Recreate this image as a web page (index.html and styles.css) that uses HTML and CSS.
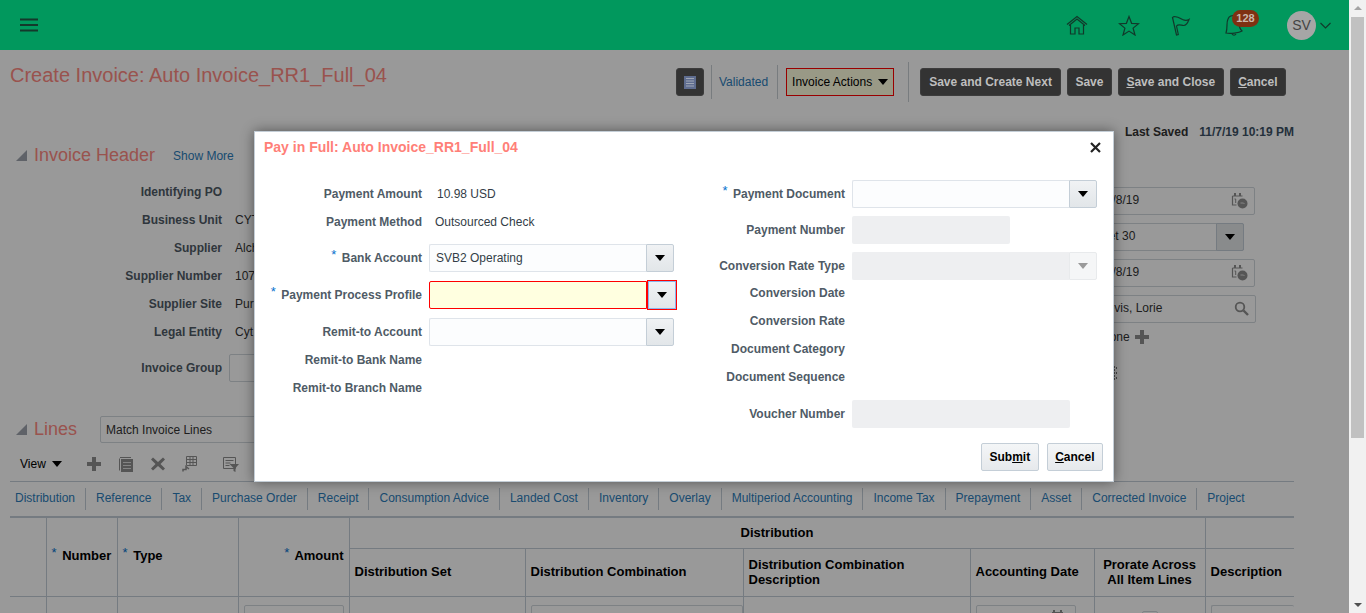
FILE: index.html
```html
<!DOCTYPE html>
<html>
<head>
<meta charset="utf-8">
<title>Create Invoice: Auto Invoice_RR1_Full_04</title>
<link rel="stylesheet" href="styles.css">
</head>
<body>
<div id="contentWrapper">

<div class="topbar">
	<svg class="burger" width="18" height="14" viewBox="0 0 18 14"><path d="M0 1.500h18M0 7h18M0 12.500h18" stroke="#14392b" stroke-width="1.800"/></svg>
	<div class="topIcons">
		<svg class="topIcon homeIcon" width="22" height="20" viewBox="0 0 22 20" fill="none" stroke="#12382a" stroke-width="1.200"><path d="M1 9.500 11 1.500l10 8M3 10.500 11 4l8 6.500M4.500 10v9h4.500v-6h4v6h4.500v-9"/></svg>
		<svg class="topIcon" width="22" height="21" viewBox="0 0 22 21" fill="none" stroke="#12382a" stroke-width="1.200"><path d="M11 1.500l2.600 6.800 7 .4-5.500 4.400 1.900 6.900-6-3.900-6 3.900 1.900-6.900L1.400 8.700l7-.4z"/></svg>
		<svg class="topIcon" width="20" height="21" viewBox="0 0 20 21" fill="none" stroke="#12382a" stroke-width="1.200"><path d="M1.500 2.500 5.500 20l1.800-.5L5.500 11c2-2.500 5-.5 7-.5 2 0 4-2 5.500-6-2.500 1.500-4.500 1-6.500 0C9 3 5 1.500 3 1.500z"/></svg>
		<div class="bell">
			<svg width="18" height="22" viewBox="0 0 18 22" fill="none" stroke="#12382a" stroke-width="1.200"><path d="M3 5c1-3 4-4 7-3 3 1 4 4 4 7s1 6 3 8c-3 2-12 3-16 2 1-3 1-5 1-8 0-2 0-4 1-6zM7 20c1 1.500 3 1.500 4 0"/></svg>
			<span class="badge">128</span>
		</div>
		<div class="avatar">SV</div>
		<svg class="chevron" width="11" height="7" viewBox="0 0 11 7" fill="none" stroke="#12382a" stroke-width="1.100"><path d="M.5 1l5 5 5-5"/></svg>
	</div>
</div>

<div class="page">
	<div class="titleRow">
		<h1>Create Invoice: Auto Invoice_RR1_Full_04</h1>
		<div class="actions">
			<button class="darkBtn iconBtn"><svg width="12" height="13" viewBox="0 0 12 13"><rect width="12" height="13" fill="#5F6D90"/><path d="M2 2.500h8M2 5h8M2 7.500h8M2 10h8" stroke="#A0A7B5" stroke-width="1"/></svg></button>
			<span class="vsep"></span>
			<a class="link validated">Validated</a>
			<span class="vsep"></span>
			<button class="menuBtn">Invoice Actions<i class="arrow"></i></button>
			<span class="vsep tall"></span>
			<button class="darkBtn nextBtn">Save and Create Next</button>
			<button class="darkBtn">Save</button>
			<button class="darkBtn"><u>S</u>ave and Close</button>
			<button class="darkBtn"><u>C</u>ancel</button>
		</div>
	</div>
	<div class="savedRow"><b>Last Saved</b><b class="savedTime">11/7/19 10:19 PM</b></div>

	<div class="sectionHead headerHead">
		<i class="disclose"></i><h2>Invoice Header</h2><a class="link showMore">Show More</a>
	</div>

	<div class="invoiceForm">
		<div class="bgLeft">
			<div class="bgRow"><label>Identifying PO</label></div>
			<div class="bgRow"><label>Business Unit</label><span>CYT</span></div>
			<div class="bgRow"><label>Supplier</label><span>Alch</span></div>
			<div class="bgRow"><label>Supplier Number</label><span>107</span></div>
			<div class="bgRow"><label>Supplier Site</label><span>Pur</span></div>
			<div class="bgRow"><label>Legal Entity</label><span>Cyt</span></div>
			<div class="bgRow groupRow"><label>Invoice Group</label><span class="bgInput"></span></div>
		</div>
		<div class="bgRight">
			<div class="bgField">11/8/19<svg class="fieldIcon" width="17" height="16" viewBox="0 0 17 16"><path d="M1.500 3h10M1.500 3v9h4" stroke="#8E8E8E" stroke-width="1.200" fill="none"/><path d="M3 0h2v3H3zM8 0h2v3H8z" fill="#8E8E8E"/><path d="M3.500 6h1.200v4" stroke="#8E8E8E" fill="none"/><circle cx="11.500" cy="10.500" r="5" fill="#8E8E8E"/><path d="M9.500 10h3l1 1" stroke="#DDD" fill="none"/></svg></div>
			<div class="bgField short">Net 30<span class="bgDrop"><i class="arrow"></i></span></div>
			<div class="bgField">11/8/19<svg class="fieldIcon" width="17" height="16" viewBox="0 0 17 16"><path d="M1.500 3h10M1.500 3v9h4" stroke="#8E8E8E" stroke-width="1.200" fill="none"/><path d="M3 0h2v3H3zM8 0h2v3H8z" fill="#8E8E8E"/><path d="M3.500 6h1.200v4" stroke="#8E8E8E" fill="none"/><circle cx="11.500" cy="10.500" r="5" fill="#8E8E8E"/><path d="M9.500 10h3l1 1" stroke="#DDD" fill="none"/></svg></div>
			<div class="bgField wide">Devis, Lorie<svg class="fieldIcon" width="15" height="15" viewBox="0 0 15 15" fill="none" stroke="#8E8E8E"><circle cx="6" cy="6" r="4.300" stroke-width="1.800"/><path d="M9.500 9.500 14 14" stroke-width="2.400"/></svg></div>
			<div class="noneRow">None<svg width="14" height="14" viewBox="0 0 14 14"><path d="M5 0h4v5h5v4H9v5H5V9H0V5h5z" fill="#8E8E8E"/></svg></div>
			<svg class="hiddenIcon" width="25" height="15" viewBox="0 0 25 15"><path d="M21.500 0v15M23.500 1v3M23.500 6v3M23.500 11v3" stroke="#777" stroke-dasharray="2 1"/></svg>
		</div>
	</div>

	<div class="sectionHead linesHead">
		<i class="disclose"></i><h2>Lines</h2><span class="matchInput">Match Invoice Lines</span>
	</div>

	<div class="linesBar">
		<span class="viewMenu">View<i class="arrow"></i></span>
		<svg class="barIcon first" width="14" height="14" viewBox="0 0 14 14"><path d="M5 0h4v5h5v4H9v5H5V9H0V5h5z" fill="#8E8E8E"/></svg>
		<svg class="barIcon" width="14" height="15" viewBox="0 0 14 15" fill="none" stroke="#8E8E8E"><path d="M.5 1.500v12M1 .5h11"/><rect x="2" y="2" width="12" height="13" fill="#8E8E8E" stroke="none"/><path d="M4 5.500h8M4 8.500h8M4 11.500h8" stroke="#DDD"/></svg>
		<svg class="barIcon" width="14" height="14" viewBox="0 0 14 14"><path d="M2 .5l5 4.500 5-4.500L14 2.500 9.500 7l4.500 4.500-2 2L7 9l-5 4.500-2-2L4.500 7 0 2.500z" fill="#8E8E8E"/></svg>
		<svg class="barIcon tableIcon" width="15" height="16" viewBox="0 0 15 16" fill="none" stroke="#8E8E8E"><path d="M4.500.5h10v9h-10zM4.500 3.500h10M4.500 6.500h10M8 .5v9M11 .5v9"/><path d="M1 15.500v-2h3v-3l3 2.500" stroke-width="1.500"/></svg>
		<svg class="barIcon gapIcon" width="16" height="15" viewBox="0 0 16 15" fill="none" stroke="#8E8E8E"><path d="M.5.500h12v11h-12zM2.500 3.500h8M2.500 6h5M2.500 8.500h4"/><path d="M6.500 7h9.500L12.500 11v4l-2-1v-3z" fill="#8E8E8E" stroke="none"/></svg>
	</div>

	<div class="tabs">
		<a>Distribution</a><a>Reference</a><a>Tax</a><a>Purchase Order</a><a>Receipt</a><a>Consumption Advice</a><a>Landed Cost</a><a>Inventory</a><a>Overlay</a><a>Multiperiod Accounting</a><a>Income Tax</a><a>Prepayment</a><a>Asset</a><a>Corrected Invoice</a><a>Project</a>
	</div>

	<table class="linesTable">
		<colgroup>
			<col class="c36"><col class="c71"><col class="c121"><col class="c111"><col class="c176"><col class="c218"><col class="c227"><col class="c124"><col class="c111"><col class="c89">
		</colgroup>
		<tr class="groupHead">
			<th rowspan="2"></th>
			<th rowspan="2" class="left spanHead"><sup>*</sup> Number</th>
			<th rowspan="2" class="left spanHead"><sup>*</sup> Type</th>
			<th rowspan="2" class="right spanHead"><sup>*</sup> Amount</th>
			<th colspan="5">Distribution</th>
			<th></th>
		</tr>
		<tr class="colHead">
			<th class="left">Distribution Set</th>
			<th class="left">Distribution Combination</th>
			<th class="left">Distribution Combination Description</th>
			<th class="left">Accounting Date</th>
			<th>Prorate Across All Item Lines</th>
			<th class="left">Description</th>
		</tr>
		<tr class="dataRow">
			<td></td><td></td><td></td>
			<td><span class="cellInput"></span></td>
			<td></td>
			<td class="comboCell"><span class="cellInput comboInput"></span></td>
			<td></td>
			<td><span class="cellInput"><svg class="cellIcon" width="13" height="8" viewBox="0 0 13 8"><path d="M1 3h11M3 0v4M10 0v4" stroke="#8E8E8E" stroke-width="2"/></svg></span></td>
			<td class="center"><span class="cellCheck"></span></td>
			<td class="lastCell"><span class="cellInput descInput"></span></td>
		</tr>
	</table>
</div>

<div class="overlay"></div>

<div class="dialog">
	<div class="dialogTitle">
		<span>Pay in Full: Auto Invoice_RR1_Full_04</span>
		<svg width="11" height="11" viewBox="0 0 11 11"><path d="M1 1l9 9M10 1l-9 9" stroke="#222" stroke-width="2.200"/></svg>
	</div>
	<div class="dialogBody">
		<div class="formCol leftCol">
			<div class="row textRow"><label>Payment Amount</label><span class="value amount">10.98 USD</span></div>
			<div class="row textRow"><label>Payment Method</label><span class="value">Outsourced Check</span></div>
			<div class="row fieldRow firstField">
				<label><sup>*</sup> Bank Account</label>
				<div class="combo"><span class="comboText">SVB2 Operating</span><span class="comboBtn"><i class="arrow"></i></span></div>
			</div>
			<div class="row fieldRow">
				<label><sup>*</sup> Payment Process Profile</label>
				<div class="combo invalid"><span class="comboText"></span><span class="comboBtn"><i class="arrow"></i></span></div>
			</div>
			<div class="row fieldRow">
				<label>Remit-to Account</label>
				<div class="combo"><span class="comboText"></span><span class="comboBtn"><i class="arrow"></i></span></div>
			</div>
			<div class="row textRow noGap"><label>Remit-to Bank Name</label></div>
			<div class="row textRow"><label>Remit-to Branch Name</label></div>
		</div>
		<div class="formCol rightCol">
			<div class="row fieldRow noMargin">
				<label><sup>*</sup> Payment Document</label>
				<div class="combo"><span class="comboText"></span><span class="comboBtn"><i class="arrow"></i></span></div>
			</div>
			<div class="row fieldRow">
				<label>Payment Number</label>
				<span class="readonly numberField"></span>
			</div>
			<div class="row fieldRow">
				<label>Conversion Rate Type</label>
				<div class="combo disabled"><span class="comboText"></span><span class="comboBtn"><i class="arrow"></i></span></div>
			</div>
			<div class="row noGap"><label>Conversion Date</label></div>
			<div class="row"><label>Conversion Rate</label></div>
			<div class="row"><label>Document Category</label></div>
			<div class="row"><label>Document Sequence</label></div>
			<div class="row fieldRow firstField">
				<label>Voucher Number</label>
				<span class="readonly voucherField"></span>
			</div>
		</div>
	</div>
	<div class="dialogFoot">
		<button class="lightBtn">Sub<u>m</u>it</button>
		<button class="lightBtn"><u>C</u>ancel</button>
	</div>
</div>

<div class="scrollbar">
	<i class="scrollUp"></i>
	<div class="scrollThumb"></div>
	<i class="scrollDown"></i>
</div>

</div>
</body>
</html>
```
FILE: styles.css
```css
* {
box-sizing:border-box;
}
html, body {
margin:0;
height:100%;
overflow:hidden;
}
body {
background:#FFFFFF;
color:#333333;
font-family:"Liberation Sans",Arial,sans-serif;
font-size:12px;
}
#contentWrapper {
position:relative;
width:1366px;
height:613px;
overflow:hidden;
}
h1, h2 {
margin:0;
font-weight:normal;
color:#FF8A82;
}
button {
font-family:inherit;
cursor:default;
}
a.link, .tabs a {
color:#2C7DBB;
}
sup {
color:#0572CE;
font-size:13px;
font-weight:normal;
line-height:0;
vertical-align:3px;
margin-right:2px;
}
.arrow {
display:inline-block;
width:0;
height:0;
border-left:5px solid transparent;
border-right:5px solid transparent;
border-top:6px solid #000000;
}

/* top bar */
.topbar {
height:50px;
width:1349px;
background:#01985D;
display:flex;
align-items:center;
justify-content:space-between;
padding:0 18px 0 20px;
}
.topIcons {
display:flex;
align-items:center;
}
.topIcon {
margin-right:31px;
}
.homeIcon {
margin-right:30px;
}
.bell {
position:relative;
width:47px;
height:22px;
margin-left:3px;
margin-right:15px;
}
.badge {
position:absolute;
left:7px;
top:-4px;
width:27px;
height:17px;
border-radius:9px;
background:#7F3112;
color:#C9B8AC;
font-size:11px;
font-weight:bold;
text-align:center;
line-height:17px;
}
.avatar {
width:29px;
height:29px;
border-radius:50%;
background:#A6A6A6;
color:#444444;
font-size:14px;
text-align:center;
line-height:29px;
margin-right:4px;
}

/* background page */
.page {
width:1349px;
padding:0 55px 0 10px;
}
.titleRow {
display:flex;
justify-content:space-between;
align-items:flex-start;
padding:12px 8px 0 0;
height:53px;
}
h1 {
font-size:20px;
line-height:26px;
}
.actions {
display:flex;
align-items:center;
height:40px;
}
.darkBtn {
position:relative;
z-index:2;
height:28px;
background:#333333;
border:1px solid #3C3C3C;
border-radius:3px;
color:#BEBEBE;
font-size:12px;
font-weight:bold;
padding:0 7.5px;
margin-left:6px;
white-space:nowrap;
}
.nextBtn {
padding:0 8px;
}
.iconBtn {
width:28px;
margin:0;
padding:0;
display:flex;
align-items:center;
justify-content:center;
}
.vsep {
width:1px;
height:34px;
background:#C9CFD4;
margin:0 7px;
}
.vsep.tall {
height:40px;
margin:0 5px 0 14px;
}
.validated {
padding-right:2px;
}
.menuBtn {
height:28px;
background:#FFFFE0;
border:1px solid #FF0000;
color:#000000;
font-size:12px;
padding:0 5px;
margin-left:1px;
display:flex;
align-items:center;
gap:6px;
}
.savedRow {
display:flex;
justify-content:flex-end;
gap:11px;
line-height:14px;
color:#333333;
margin-top:22px;
}
.savedTime {
color:#3C5164;
}
.sectionHead {
display:flex;
align-items:center;
}
.headerHead {
margin-top:4px;
height:24px;
}
.disclose {
width:0;
height:0;
margin:0 7px 0 6px;
border-bottom:11px solid #9EA3AD;
border-left:11px solid transparent;
}
h2 {
font-size:18px;
line-height:24px;
}
.showMore {
margin:2px 0 0 18px;
}

.invoiceForm {
display:flex;
justify-content:space-between;
padding-right:38px;
margin-top:11px;
}
.bgLeft {
width:400px;
}
.bgRow {
display:flex;
align-items:center;
height:28px;
}
.bgRow label {
width:212px;
text-align:right;
font-weight:bold;
color:#4F5B66;
margin-right:13px;
}
.groupRow {
margin-top:8px;
}
.bgInput {
width:100px;
height:28px;
border:1px solid #D0D7DD;
border-radius:2px;
margin-left:-6px;
}
.bgRight {
width:163px;
margin-top:9px;
}
.bgField {
position:relative;
height:28px;
width:162px;
margin-bottom:8px;
padding-left:6px;
line-height:25px;
border:1px solid #D0D7DD;
border-radius:2px;
color:#333333;
}
.bgField.short {
width:151px;
}
.bgField.wide {
width:163px;
padding-left:5px;
}
.bgDrop {
position:absolute;
right:-1px;
top:-1px;
width:28px;
height:28px;
background:#E4E8EA;
border:1px solid #C4CED7;
border-radius:0 2px 2px 0;
display:flex;
align-items:center;
justify-content:center;
}
.fieldIcon {
position:absolute;
right:6px;
top:5px;
}
.noneRow {
display:flex;
align-items:center;
gap:5px;
padding-left:8px;
margin-top:-1px;
}
.hiddenIcon {
display:block;
margin-top:22px;
}
.linesHead {
margin-top:34px;
height:27px;
}
.linesHead h2 {
margin-top:-2px;
}
.matchInput {
width:300px;
height:27px;
margin-left:23px;
padding-left:5px;
line-height:26px;
border:1px solid #D0D7DD;
border-radius:2px;
}
.linesBar {
display:flex;
align-items:center;
height:39px;
padding:4px 0 0 10px;
border-bottom:1px solid #C4CED7;
}
.viewMenu {
display:flex;
align-items:center;
gap:6px;
width:67px;
color:#000000;
}
.barIcon {
margin-left:18px;
}
.barIcon.first {
margin-left:0;
}
.tableIcon {
margin-left:17px;
}
.gapIcon {
margin-left:26px;
}
.tabs {
display:flex;
align-items:center;
height:35px;
border-bottom:1px solid #C4CED7;
white-space:nowrap;
}
.tabs a {
height:22px;
line-height:20px;
padding:0 10px;
border-right:1px solid #C4CED7;
}
.tabs a:first-child {
padding-left:5px;
}
.tabs a:last-child {
border-right:none;
}
.linesTable {
table-layout:fixed;
width:1284px;
border-collapse:collapse;
}
.c36 { width:36px; }
.c71 { width:71px; }
.c121 { width:121px; }
.c111 { width:111px; }
.c176 { width:176px; }
.c218 { width:218px; }
.c227 { width:227px; }
.c124 { width:124px; }
.c89 { width:89px; }
.linesTable th {
font-size:13px;
font-weight:bold;
color:#000000;
padding:0 5px 2px;
border:1px solid #C4CED7;
line-height:15px;
}
.linesTable th.spanHead {
padding-bottom:4px;
}
.linesTable tr th:first-child {
border-left:none;
}
.linesTable tr th:last-child {
border-right:none;
}
.linesTable th.left {
text-align:left;
}
.linesTable th.right {
text-align:right;
padding-right:5px;
}
.groupHead {
height:31px;
}
.colHead {
height:48px;
}
.dataRow td {
padding:8px 5px 0;
vertical-align:top;
border-left:1px solid #C4CED7;
}
.dataRow td:first-child {
border-left:none;
}
.dataRow td.center {
text-align:center;
}
.dataRow td.lastCell, .dataRow td.comboCell {
padding-right:0;
}
.cellInput {
position:relative;
display:block;
width:100px;
height:28px;
border:1px solid #D0D7DD;
border-radius:2px;
}
.comboInput {
width:100%;
}
.descInput {
width:100%;
border-right:none;
}
.cellIcon {
position:absolute;
right:11px;
top:4px;
}
.cellCheck {
display:inline-block;
width:16px;
height:16px;
margin-top:6px;
border:1px solid #D0D7DD;
border-radius:2px;
}

/* dim layer and dialog */
.overlay {
position:absolute;
z-index:1;
left:0;
top:50px;
width:1349px;
height:563px;
background:rgba(0,0,0,0.4);
}
.dialog {
position:absolute;
z-index:3;
left:254px;
top:131px;
width:860px;
height:351px;
background:#FFFFFF;
border:1px solid #C4CED7;
box-shadow:0 0 12px rgba(0,0,0,0.45);
}
.dialogTitle {
display:flex;
justify-content:space-between;
align-items:center;
height:30px;
padding:0 12px 0 9px;
font-size:14px;
font-weight:bold;
color:#FF7F78;
}
.dialogBody {
display:flex;
padding-top:18px;
}
.formCol {
flex:none;
}
.leftCol {
width:424px;
}
.leftCol label {
width:167px;
}
.rightCol label {
width:166px;
}
.row {
display:flex;
align-items:center;
height:26px;
margin-top:2px;
}
.leftCol .row:first-child {
margin-top:0;
}
.row.textRow {
padding-top:2px;
}
.row label {
flex:none;
text-align:right;
font-weight:bold;
color:#4F5B66;
margin-right:7px;
white-space:nowrap;
}
.value {
color:#333D47;
margin-left:6px;
}
.value.amount {
margin-left:8px;
}
.fieldRow {
height:28px;
margin-top:8px;
}
.leftCol .fieldRow {
margin-top:9px;
}
.leftCol .fieldRow.firstField, .rightCol .fieldRow.firstField {
margin-top:10px;
}
.rightCol .fieldRow.noMargin {
margin-top:0;
}
.row.noGap {
margin-top:0;
}
.combo {
display:flex;
width:245px;
height:28px;
}
.comboText {
flex:1;
height:28px;
padding-left:6px;
line-height:26px;
color:#333D47;
background:#FCFDFE;
border:1px solid #DFE4EA;
border-right:none;
border-radius:2px 0 0 2px;
}
.comboBtn {
position:relative;
flex:none;
width:28px;
height:28px;
display:flex;
align-items:center;
justify-content:center;
background:linear-gradient(#F0F2F4,#E2E6E9);
border:1px solid #C4CED7;
border-radius:0 2px 2px 0;
}
.invalid {
width:247px;
}
.invalid .comboText {
flex:none;
width:218px;
background:#FFFFE0;
border:1px solid #FF0000;
}
.invalid .comboBtn {
outline:1px solid #FF0000;
margin-left:1px;
border:1px solid #8AB4EE;
border-radius:0;
}
.disabled .comboText {
background:#EEEFF1;
border-color:#EEEFF1;
}
.disabled .comboBtn {
background:#F5F6F7;
border-color:#E8EAEC;
}
.disabled .arrow {
border-top-color:#9A9A9A;
}
.readonly {
display:block;
height:28px;
background:#EEEFF1;
border-radius:2px;
}
.numberField {
width:158px;
}
.voucherField {
width:218px;
}
.dialogFoot {
position:absolute;
right:10px;
bottom:10px;
display:flex;
gap:8px;
}
.lightBtn {
height:28px;
padding:0 7.5px;
background:linear-gradient(#F4F6F7,#E6E9EC);
border:1px solid #C4CED7;
border-radius:2px;
color:#000000;
font-size:12px;
font-weight:bold;
}

/* fake browser scrollbar */
.scrollbar {
position:absolute;
right:0;
top:0;
width:17px;
height:613px;
background:#F1F1F1;
}
.scrollUp, .scrollDown {
position:absolute;
left:5px;
width:0;
height:0;
border-left:4px solid transparent;
border-right:4px solid transparent;
}
.scrollUp {
top:6px;
border-bottom:4px solid #A3A3A3;
}
.scrollDown {
bottom:6px;
border-top:4px solid #505050;
}
.scrollThumb {
position:absolute;
left:2px;
top:17px;
width:13px;
height:421px;
background:#C1C1C1;
}
```
